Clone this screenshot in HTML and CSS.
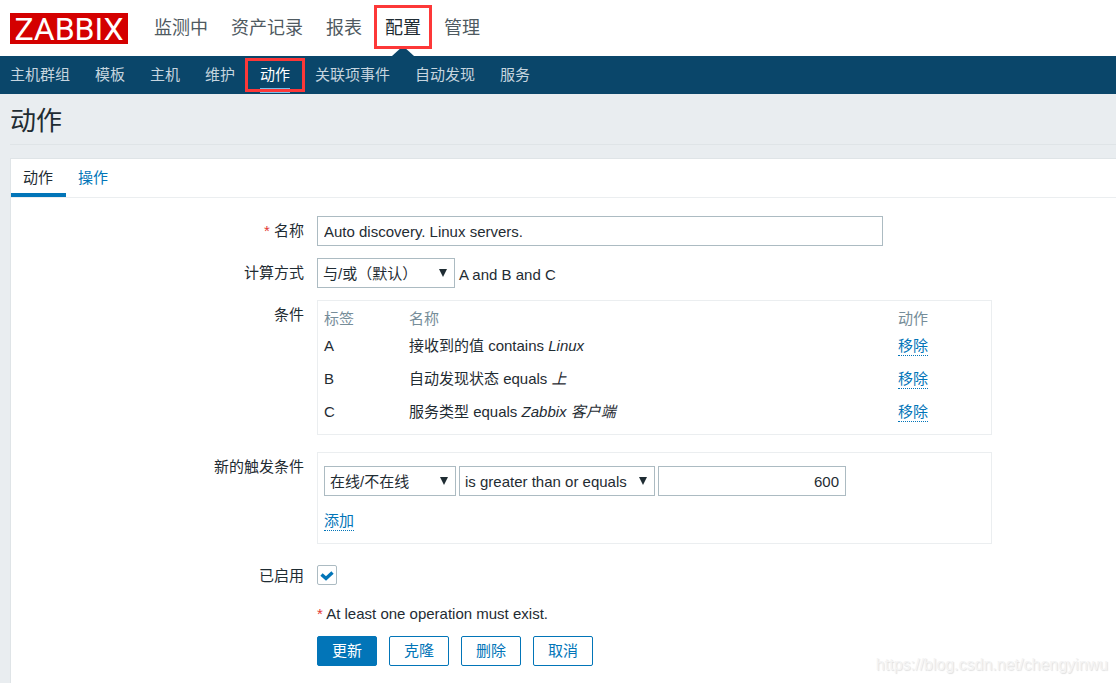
FILE: index.html
```html
<!DOCTYPE html>
<html lang="zh-CN">
<head>
<meta charset="utf-8">
<meta name="viewport" content="width=device-width, initial-scale=1">
<title>动作</title>
<link rel="stylesheet" href="styles.css">
</head>
<body>
<header class="topbar">
  <a class="logo" href="#">ZABBIX</a>
  <nav class="mainnav">
    <a href="#">监测中</a>
    <a href="#">资产记录</a>
    <a href="#">报表</a>
    <a href="#" class="current">配置<span class="mark mark-main"></span></a>
    <a href="#">管理</a>
  </nav>
</header>
<nav class="subnav">
  <a href="#">主机群组</a>
  <a href="#">模板</a>
  <a href="#">主机</a>
  <a href="#">维护</a>
  <a href="#" class="current">动作<span class="mark mark-sub"></span></a>
  <a href="#">关联项事件</a>
  <a href="#">自动发现</a>
  <a href="#">服务</a>
</nav>
<main class="page">
  <h1 class="title">动作</h1>
  <section class="panel">
    <div class="tabs">
      <a href="#" class="tab active">动作</a>
      <a href="#" class="tab">操作</a>
    </div>
    <form class="form">
      <div class="row">
        <label class="label" for="name"><span class="star">*</span> 名称</label>
        <input class="field name" id="name" type="text" value="Auto discovery. Linux servers.">
      </div>
      <div class="row">
        <label class="label" for="calc">计算方式</label>
        <div class="controls">
          <span class="select calc"><select class="field" id="calc"><option>与/或（默认）</option></select></span>
          <span class="formula">A and B and C</span>
        </div>
      </div>
      <div class="row">
        <span class="label">条件</span>
        <div class="box">
          <table class="conditions">
            <thead><tr><th class="col-tag">标签</th><th>名称</th><th class="col-action">动作</th></tr></thead>
            <tbody>
              <tr><td>A</td><td>接收到的值 contains <em>Linux</em></td><td><button type="button" class="link">移除</button></td></tr>
              <tr><td>B</td><td>自动发现状态 equals <em>上</em></td><td><button type="button" class="link">移除</button></td></tr>
              <tr><td>C</td><td>服务类型 equals <em>Zabbix 客户端</em></td><td><button type="button" class="link">移除</button></td></tr>
            </tbody>
          </table>
        </div>
      </div>
      <div class="row spaced">
        <label class="label" for="type">新的触发条件</label>
        <div class="box new">
          <div class="controls">
            <span class="select type"><select class="field" id="type"><option>在线/不在线</option></select></span>
            <span class="select operator"><select class="field" aria-label="运算符"><option>is greater than or equals</option></select></span>
            <input class="field value" type="text" value="600" aria-label="值">
          </div>
          <button type="button" class="link">添加</button>
        </div>
      </div>
      <div class="row spaced">
        <label class="label" for="enabled">已启用</label>
        <div class="check">
          <input id="enabled" type="checkbox" checked>
          <svg viewBox="0 0 20 20" aria-hidden="true"><path d="M4.500 9.500 L9 13.500 L15.500 7.500" fill="none" stroke="#0275b8" stroke-width="3.4"/></svg>
        </div>
      </div>
      <div class="row remark">
        <div class="note"><span class="star">*</span> At least one operation must exist.</div>
      </div>
      <div class="row actions">
        <div class="buttons">
          <button type="button" class="btn primary">更新</button>
          <button type="button" class="btn">克隆</button>
          <button type="button" class="btn">删除</button>
          <button type="button" class="btn">取消</button>
        </div>
      </div>
    </form>
  </section>
</main>
<div class="watermark">https://blog.csdn.net/chengyinwu</div>
</body>
</html>
```
FILE: styles.css
```css
* {
  box-sizing: border-box;
}

body {
  position: relative;
  display: flex;
  flex-direction: column;
  min-height: 100vh;
  margin: 0;
  background: #e9edf0;
  color: #1f2c33;
  font: 15px/20px "Liberation Sans", "Noto Sans CJK SC", sans-serif;
}

a {
  text-decoration: none;
}

.topbar {
  display: flex;
  align-items: center;
  gap: 26px;
  height: 56px;
  padding-left: 10px;
  background: #fff;
}

.logo {
  width: 118px;
  height: 31px;
  background: #d40000;
  color: #fff;
  font: 32px/32px Roboto, sans-serif;
  text-align: center;
}

.mainnav {
  display: flex;
  gap: 23px;
  font-size: 18px;
  line-height: 56px;
}

.mainnav a {
  position: relative;
  color: #4f5a61;
}

.mainnav .current {
  color: #1f2c33;
}

.mainnav .current::after {
  content: "";
  position: absolute;
  left: 50%;
  bottom: 0;
  width: 22px;
  height: 10px;
  margin-left: -11px;
  background: #0a466a;
  clip-path: polygon(50% 0, 100% 100%, 0 100%);
}

.mark {
  position: absolute;
  z-index: 1;
  border: 3px solid #fd3838;
}

.mark-main {
  inset: 5px -11px 7px;
}

.subnav {
  display: flex;
  gap: 25px;
  height: 38px;
  padding-left: 10px;
  background: #0a466a;
  line-height: 38px;
}

.subnav a {
  position: relative;
  color: #c6d5df;
}

.subnav .current {
  color: #fff;
}

.subnav .current::after {
  content: "";
  position: absolute;
  inset: auto 0 1px;
  height: 5px;
  background: #78c0ea;
}

.mark-sub {
  inset: 2px -15px 2px;
}

.page {
  display: flex;
  flex: 1;
  flex-direction: column;
  padding-left: 10px;
}

.title {
  margin: 0 0 13px;
  padding-top: 4px;
  border-bottom: 1px solid #dfe4e7;
  font-size: 26px;
  font-weight: 400;
  line-height: 46px;
}

.panel {
  flex: 1;
  border: solid #dfe4e7;
  border-width: 1px 0 0 1px;
  background: #fff;
}

.tabs {
  display: flex;
  border-bottom: 1px solid #ebeef0;
}

.tab {
  height: 38px;
  padding: 0 12px;
  color: #0275b8;
  line-height: 38px;
}

.tab.active {
  padding-right: 13px;
  border-bottom: 4px solid #0275b8;
  color: #1f2c33;
}

.form {
  display: flex;
  flex-direction: column;
  gap: 12px;
  padding: 18px 12px 17px 0;
}

.row {
  display: grid;
  grid-template-columns: 293px minmax(0, 1fr);
  column-gap: 13px;
  align-items: start;
}

.spaced {
  margin-top: 5px;
}

.label {
  line-height: 30px;
  text-align: right;
}

.star {
  color: #e33734;
}

.field {
  height: 30px;
  padding: 0 6px;
  border: 1px solid #acbbc2;
  border-radius: 0;
  background: #fff;
  color: #1f2c33;
  font: inherit;
}

.name {
  width: 100%;
  max-width: 566px;
}

.controls {
  display: flex;
  align-items: center;
  gap: 3px;
}

.select {
  position: relative;
}

.select .field {
  display: block;
  width: 100%;
  padding: 2px 5px 0;
  appearance: none;
}

.select::after {
  content: "";
  position: absolute;
  top: 11px;
  right: 8px;
  width: 8px;
  height: 8px;
  background: #1f2c33;
  clip-path: polygon(0 0, 100% 0, 50% 100%);
  pointer-events: none;
}

.calc {
  width: 138px;
}

.type {
  width: 132px;
}

.operator {
  width: 196px;
}

.value {
  width: 188px;
  text-align: right;
}

.formula {
  padding: 3px 0 0 1px;
}

.box {
  max-width: 675px;
  padding: 6px;
  border: 1px solid #ebeef0;
}

.conditions {
  width: 100%;
  table-layout: fixed;
  border-collapse: collapse;
}

.conditions th,
.conditions td {
  height: 33px;
  padding: 0;
  text-align: left;
}

.conditions th {
  height: 22px;
  padding-top: 2px;
  color: #768d99;
  font-weight: 400;
}

.col-tag {
  width: 85px;
}

.col-action {
  width: 87px;
}

.link {
  display: block;
  height: 20px;
  padding: 0;
  border: 0;
  border-bottom: 1px dotted #0275b8;
  background: none;
  color: #0275b8;
  font: inherit;
  line-height: 19px;
}

.new {
  padding: 13px 6px 12px;
}

.new .link {
  margin-top: 15px;
}

.check {
  position: relative;
  width: 20px;
  height: 20px;
  margin: 4px 0;
}

.check input {
  width: 20px;
  height: 20px;
  margin: 0;
  border: 1px solid #acbbc2;
  border-radius: 2px;
  background: #fff;
  appearance: none;
}

.check svg {
  position: absolute;
  inset: 0;
  pointer-events: none;
}

.check input:not(:checked) + svg {
  display: none;
}

.note,
.buttons {
  grid-column: 2;
}

.note {
  line-height: 26px;
}

.remark {
  margin-top: -2px;
}

.actions {
  margin-top: -3px;
}

.buttons {
  display: flex;
  flex-wrap: wrap;
  gap: 12px;
}

.btn {
  width: 60px;
  height: 30px;
  padding: 0;
  border: 1px solid #0275b8;
  border-radius: 2px;
  background: #fff;
  color: #0275b8;
  font: inherit;
}

.primary {
  background: #0275b8;
  color: #fff;
}

.watermark {
  position: absolute;
  right: 8px;
  bottom: 8px;
  color: #f4f4f4;
  font-size: 16px;
  text-shadow: 1px 1px 1px #e0e0e0;
}
```
